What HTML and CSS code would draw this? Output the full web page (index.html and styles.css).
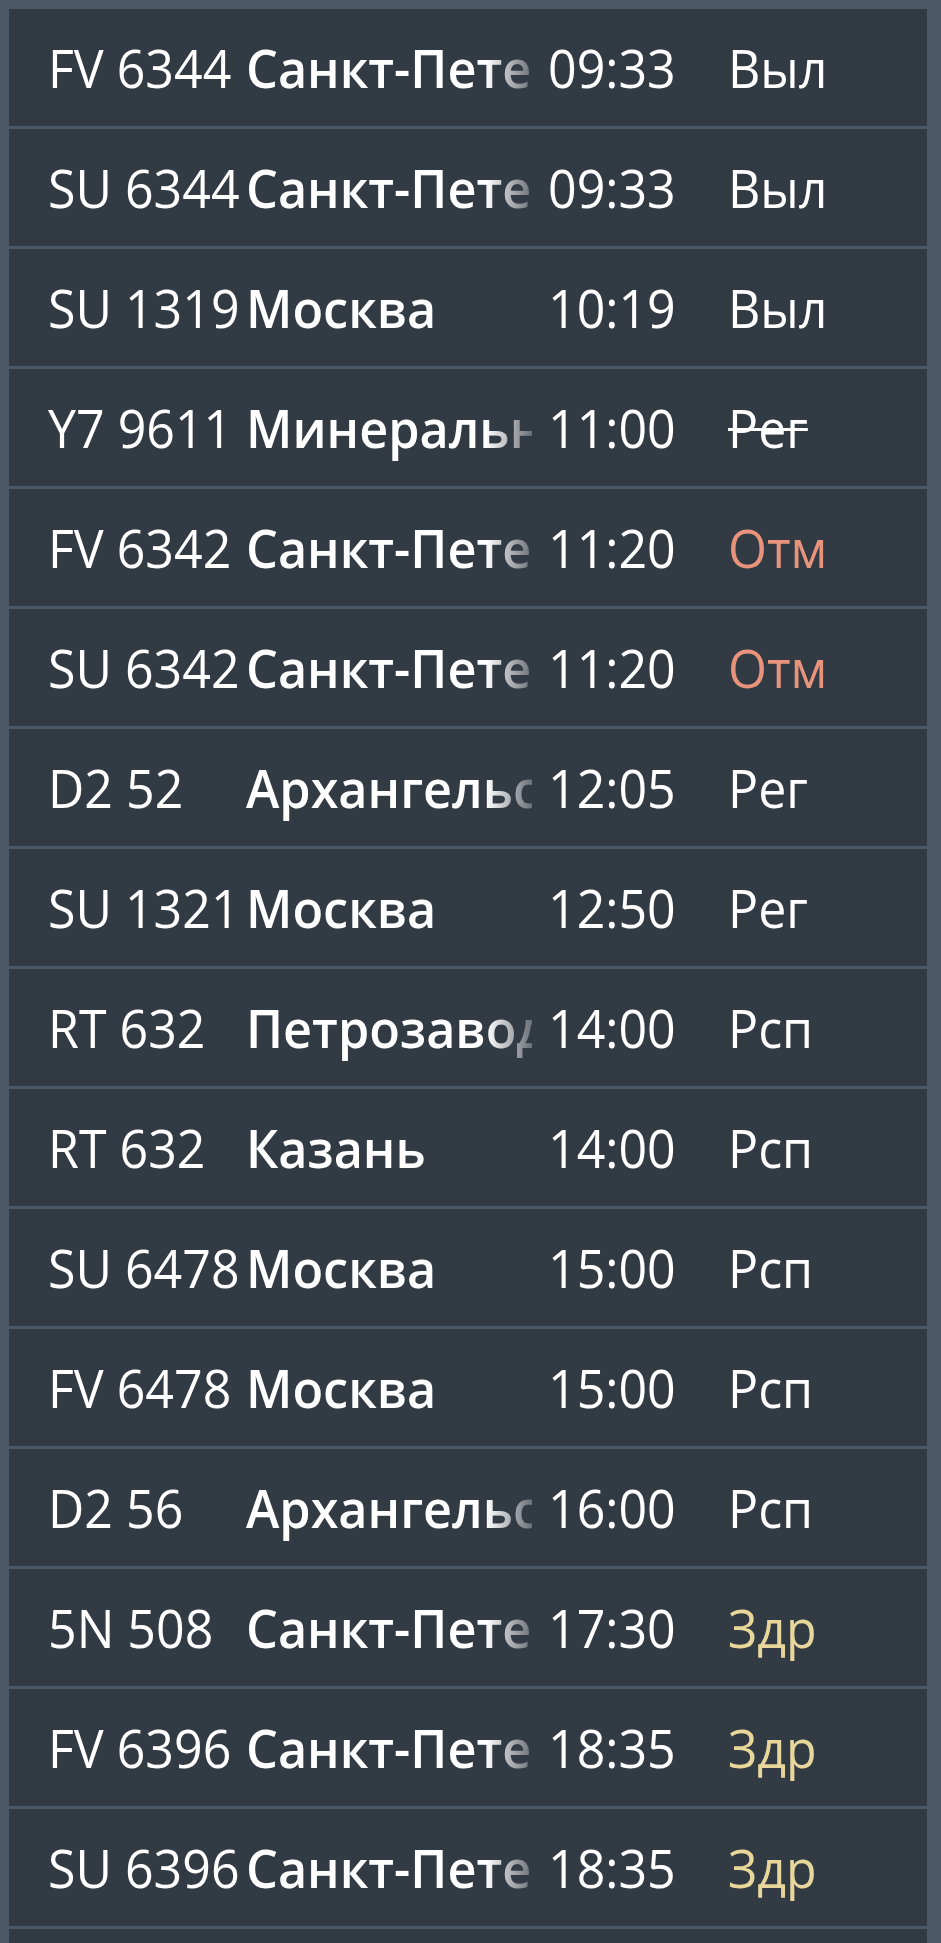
FILE: index.html
```html
<!DOCTYPE html>
<html lang="ru">
<head>
<meta charset="utf-8">
<title>Табло</title>
<link rel="stylesheet" href="styles.css">
</head>
<body>
<div class="board">
  <div class="row"><span class="flight"><span class="txt">FV 6344</span></span><span class="city"><span class="txt">Санкт-Петербург</span></span><span class="time"><span class="txt">09:33</span></span><span class="status"><span class="txt">Выл</span></span></div>
  <div class="row"><span class="flight"><span class="txt">SU 6344</span></span><span class="city"><span class="txt">Санкт-Петербург</span></span><span class="time"><span class="txt">09:33</span></span><span class="status"><span class="txt">Выл</span></span></div>
  <div class="row"><span class="flight"><span class="txt">SU 1319</span></span><span class="city"><span class="txt">Москва</span></span><span class="time"><span class="txt">10:19</span></span><span class="status"><span class="txt">Выл</span></span></div>
  <div class="row"><span class="flight"><span class="txt">Y7 9611</span></span><span class="city"><span class="txt">Минеральные Воды</span></span><span class="time"><span class="txt">11:00</span></span><span class="status struck"><span class="txt">Рег</span></span></div>
  <div class="row"><span class="flight"><span class="txt">FV 6342</span></span><span class="city"><span class="txt">Санкт-Петербург</span></span><span class="time"><span class="txt">11:20</span></span><span class="status cancelled"><span class="txt">Отм</span></span></div>
  <div class="row"><span class="flight"><span class="txt">SU 6342</span></span><span class="city"><span class="txt">Санкт-Петербург</span></span><span class="time"><span class="txt">11:20</span></span><span class="status cancelled"><span class="txt">Отм</span></span></div>
  <div class="row"><span class="flight"><span class="txt">D2 52</span></span><span class="city"><span class="txt">Архангельск</span></span><span class="time"><span class="txt">12:05</span></span><span class="status"><span class="txt">Рег</span></span></div>
  <div class="row"><span class="flight"><span class="txt">SU 1321</span></span><span class="city"><span class="txt">Москва</span></span><span class="time"><span class="txt">12:50</span></span><span class="status"><span class="txt">Рег</span></span></div>
  <div class="row"><span class="flight"><span class="txt">RT 632</span></span><span class="city"><span class="txt">Петрозаводск</span></span><span class="time"><span class="txt">14:00</span></span><span class="status"><span class="txt">Рсп</span></span></div>
  <div class="row"><span class="flight"><span class="txt">RT 632</span></span><span class="city"><span class="txt">Казань</span></span><span class="time"><span class="txt">14:00</span></span><span class="status"><span class="txt">Рсп</span></span></div>
  <div class="row"><span class="flight"><span class="txt">SU 6478</span></span><span class="city"><span class="txt">Москва</span></span><span class="time"><span class="txt">15:00</span></span><span class="status"><span class="txt">Рсп</span></span></div>
  <div class="row"><span class="flight"><span class="txt">FV 6478</span></span><span class="city"><span class="txt">Москва</span></span><span class="time"><span class="txt">15:00</span></span><span class="status"><span class="txt">Рсп</span></span></div>
  <div class="row"><span class="flight"><span class="txt">D2 56</span></span><span class="city"><span class="txt">Архангельск</span></span><span class="time"><span class="txt">16:00</span></span><span class="status"><span class="txt">Рсп</span></span></div>
  <div class="row"><span class="flight"><span class="txt">5N 508</span></span><span class="city"><span class="txt">Санкт-Петербург</span></span><span class="time"><span class="txt">17:30</span></span><span class="status delayed"><span class="txt">Здр</span></span></div>
  <div class="row"><span class="flight"><span class="txt">FV 6396</span></span><span class="city"><span class="txt">Санкт-Петербург</span></span><span class="time"><span class="txt">18:35</span></span><span class="status delayed"><span class="txt">Здр</span></span></div>
  <div class="row"><span class="flight"><span class="txt">SU 6396</span></span><span class="city"><span class="txt">Санкт-Петербург</span></span><span class="time"><span class="txt">18:35</span></span><span class="status delayed"><span class="txt">Здр</span></span></div>
  <div class="row row-tail"></div>
</div>
</body>
</html>
```

FILE: styles.css
```css
html, body {
  margin: 0;
  padding: 0;
}

body {
  background: #4b5866;
  padding: 9px 14px 0 9px;
  font-family: "Open Sans", "Noto Sans", sans-serif;
  color: #ffffff;
}

.board {
  background: #323a44;
}

.row {
  display: grid;
  grid-template-columns: 198px 302px 180px 1fr;
  align-items: center;
  height: 117px;
  padding-left: 39px;
  border-bottom: 3px solid #4b5866;
  font-size: 53px;
  line-height: 1;
  white-space: nowrap;
}

.row-tail {
  height: 60px;
  border-bottom: 0;
}

.txt {
  display: inline-block;
  transform: scaleX(0.945);
  transform-origin: 0 50%;
}

.flight {
  font-weight: 400;
}

.city {
  width: 286px;
  overflow: hidden;
  font-weight: 600;
  -webkit-mask-image: linear-gradient(to right, #000 calc(100% - 46px), rgba(0, 0, 0, 0.28) 100%);
  mask-image: linear-gradient(to right, #000 calc(100% - 46px), rgba(0, 0, 0, 0.28) 100%);
  padding: 6px 0 14px;
  margin-top: 8px;
}

.city .txt {
  transform: scaleX(0.95);
}

.time {
  font-weight: 400;
}

.status {
  font-weight: 400;
}

.struck .txt {
  text-decoration: line-through;
  text-decoration-thickness: 3px;
}

.cancelled {
  color: #e8937c;
}

.delayed {
  color: #e8d79a;
}
```
